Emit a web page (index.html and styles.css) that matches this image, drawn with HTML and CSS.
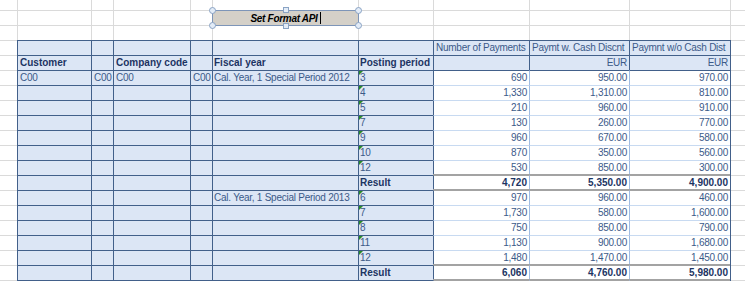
FILE: index.html
```html
<!DOCTYPE html>
<html>
<head>
<meta charset="utf-8">
<link rel="stylesheet" href="styles.css">
</head>
<body>
<div class="sheet">
  <div class="top-band">
    <span></span><span></span><span></span><span></span><span></span><span></span><span></span><span></span><span></span><span></span><span></span>
  </div>

  <div class="pivot">
    <!-- header row 1 -->
    <div class="cell"></div><div class="cell"></div><div class="cell"></div><div class="cell"></div><div class="cell"></div><div class="cell pp"></div>
    <div class="cell">Number of Payments</div><div class="cell">Paymt w. Cash Discnt</div><div class="cell">Paymnt w/o Cash Dist</div>
    <!-- header row 2 -->
    <div class="cell b">Customer</div><div class="cell"></div><div class="cell b">Company code</div><div class="cell"></div><div class="cell b fy">Fiscal year</div><div class="cell b pp">Posting period</div>
    <div class="cell"></div><div class="cell r">EUR</div><div class="cell r">EUR</div>

    <!-- 2012 -->
    <div class="cell">C00</div><div class="cell">C00</div><div class="cell">C00</div><div class="cell">C00</div><div class="cell fy">Cal. Year, 1 Special Period 2012</div><div class="cell pp tri">3</div>
    <div class="cell num k t0">690</div><div class="cell num t0">950.00</div><div class="cell num t0">970.00</div>

    <div class="cell"></div><div class="cell"></div><div class="cell"></div><div class="cell"></div><div class="cell fy"></div><div class="cell pp tri">4</div>
    <div class="cell num k">1,330</div><div class="cell num">1,310.00</div><div class="cell num">810.00</div>

    <div class="cell"></div><div class="cell"></div><div class="cell"></div><div class="cell"></div><div class="cell fy"></div><div class="cell pp tri">5</div>
    <div class="cell num k">210</div><div class="cell num">960.00</div><div class="cell num">910.00</div>

    <div class="cell"></div><div class="cell"></div><div class="cell"></div><div class="cell"></div><div class="cell fy"></div><div class="cell pp tri">7</div>
    <div class="cell num k">130</div><div class="cell num">260.00</div><div class="cell num">770.00</div>

    <div class="cell"></div><div class="cell"></div><div class="cell"></div><div class="cell"></div><div class="cell fy"></div><div class="cell pp tri">9</div>
    <div class="cell num k">960</div><div class="cell num">670.00</div><div class="cell num">580.00</div>

    <div class="cell"></div><div class="cell"></div><div class="cell"></div><div class="cell"></div><div class="cell fy"></div><div class="cell pp tri">10</div>
    <div class="cell num k">870</div><div class="cell num">350.00</div><div class="cell num">560.00</div>

    <div class="cell"></div><div class="cell"></div><div class="cell"></div><div class="cell"></div><div class="cell fy"></div><div class="cell pp tri">12</div>
    <div class="cell num k">530</div><div class="cell num">850.00</div><div class="cell num">300.00</div>

    <div class="cell"></div><div class="cell"></div><div class="cell"></div><div class="cell"></div><div class="cell fy"></div><div class="cell b pp">Result</div>
    <div class="cell num k res b">4,720</div><div class="cell num res b">5,350.00</div><div class="cell num res b">4,900.00</div>

    <!-- 2013 -->
    <div class="cell"></div><div class="cell"></div><div class="cell"></div><div class="cell"></div><div class="cell fy">Cal. Year, 1 Special Period 2013</div><div class="cell pp tri">6</div>
    <div class="cell num k res">970</div><div class="cell num res">960.00</div><div class="cell num res">460.00</div>

    <div class="cell"></div><div class="cell"></div><div class="cell"></div><div class="cell"></div><div class="cell fy"></div><div class="cell pp tri">7</div>
    <div class="cell num k">1,730</div><div class="cell num">580.00</div><div class="cell num">1,600.00</div>

    <div class="cell"></div><div class="cell"></div><div class="cell"></div><div class="cell"></div><div class="cell fy"></div><div class="cell pp tri">8</div>
    <div class="cell num k">750</div><div class="cell num">850.00</div><div class="cell num">790.00</div>

    <div class="cell"></div><div class="cell"></div><div class="cell"></div><div class="cell"></div><div class="cell fy"></div><div class="cell pp tri">11</div>
    <div class="cell num k">1,130</div><div class="cell num">900.00</div><div class="cell num">1,680.00</div>

    <div class="cell"></div><div class="cell"></div><div class="cell"></div><div class="cell"></div><div class="cell fy"></div><div class="cell pp tri">12</div>
    <div class="cell num k">1,480</div><div class="cell num">1,470.00</div><div class="cell num">1,450.00</div>

    <div class="cell"></div><div class="cell"></div><div class="cell"></div><div class="cell"></div><div class="cell fy"></div><div class="cell b pp">Result</div>
    <div class="cell num k res b">6,060</div><div class="cell num res b">4,760.00</div><div class="cell num res b">5,980.00</div>

    <!-- next row (just visible) -->
    <div class="cell"></div><div class="cell"></div><div class="cell"></div><div class="cell"></div><div class="cell fy"></div><div class="cell pp tri"></div>
    <div class="cell num k res"></div><div class="cell num res"></div><div class="cell num res"></div>
  </div>

  <div class="btn">
    <span class="btn-label">Set Format API</span><span class="caret"></span>
    <span class="hdl dot tl"></span>
    <span class="hdl dot tr"></span>
    <span class="hdl dot bl"></span>
    <span class="hdl dot br"></span>
    <span class="hdl sq tm"></span>
    <span class="hdl sq bm"></span>
  </div>
</div>
</body>
</html>
```

FILE: styles.css
```css
:root {
  --dk: #42608a;
  --lb: #dce6f5;
  --tx: #3b5a89;
  --bd: #1c3463;
  --grid: #dadada;
  --nh: #c8daf1;
  --nv: #9fbce3;
  --gray: #a3a3a3;
}

* {
  box-sizing: border-box;
}

html, body {
  margin: 0;
  padding: 0;
  background: #ffffff;
}

body {
  font-family: "Liberation Sans", Arial, sans-serif;
}

.sheet {
  position: relative;
  width: 745px;
  height: 281px;
  overflow: hidden;
  background: linear-gradient(var(--grid) 0, var(--grid) 1px, transparent 1px) 0 10px / 100% 15px repeat-y;
}

.top-band {
  display: grid;
  grid-template-columns: 17px 74px 22px 77px 22px 146px 75px 96px 100px 101px 15px;
  height: 40px;
}

.top-band span {
  border-left: 1px solid var(--grid);
}

.top-band span:first-child {
  border-left: 0;
}

.pivot {
  display: grid;
  grid-template-columns: 74px 22px 77px 22px 146px 75px 96px 100px 101px;
  grid-auto-rows: 15px;
  width: 714px;
  margin-left: 17px;
  border-right: 1px solid var(--dk);
}

.cell {
  position: relative;
  border-top: 1px solid var(--dk);
  border-left: 1px solid var(--dk);
  background: var(--lb);
  color: var(--tx);
  font-size: 10px;
  line-height: 14px;
  letter-spacing: -0.25px;
  padding: 0 2px;
  white-space: nowrap;
  overflow: hidden;
}

.cell.fy {
  padding-left: 1px;
}

.cell.pp {
  padding-left: 1px;
  overflow: visible;
}

.b {
  font-weight: 700;
  color: var(--bd);
  letter-spacing: 0;
}

.r {
  text-align: right;
}

.num {
  background: #ffffff;
  border-top-color: var(--nh);
  border-left-color: var(--nv);
  text-align: right;
}

.num.k {
  border-left-color: var(--dk);
}

.num.t0 {
  border-top-color: var(--dk);
}

.num.res {
  border-top-color: var(--gray);
  box-shadow: 0 -1px 0 var(--gray);
}

.tri::before {
  content: "";
  position: absolute;
  top: 0;
  left: 0;
  width: 0;
  height: 0;
  border-top: 4px solid #2a8a2a;
  border-right: 4px solid transparent;
}

/* form button in edit mode */
.btn {
  position: absolute;
  left: 212px;
  top: 10px;
  width: 147px;
  height: 16px;
  background: #d4d0c8;
  border: 1px solid #7d95b8;
  display: flex;
  align-items: center;
  justify-content: center;
  padding-top: 2px;
  color: #000000;
  font-family: "Liberation Sans", Arial, sans-serif;
  font-size: 10px;
  font-weight: 700;
  font-style: italic;
  letter-spacing: -0.3px;
  line-height: 12px;
}

.caret {
  display: inline-block;
  width: 1px;
  height: 12px;
  margin-left: 2px;
  margin-top: -2px;
  background: #000000;
}

.hdl {
  position: absolute;
  background: #e3ecf7;
  border: 1px solid #8aa3c4;
}

.dot {
  width: 7px;
  height: 7px;
  border-radius: 50%;
}

.dot.tl { left: -4px; top: -4px; }
.dot.tr { right: -4px; top: -4px; }
.dot.bl { left: -4px; bottom: -4px; }
.dot.br { right: -4px; bottom: -4px; }

.sq {
  width: 6px;
  height: 6px;
  left: calc(50% - 3px);
}

.sq.tm { top: -4px; }
.sq.bm { bottom: -4px; }
```
